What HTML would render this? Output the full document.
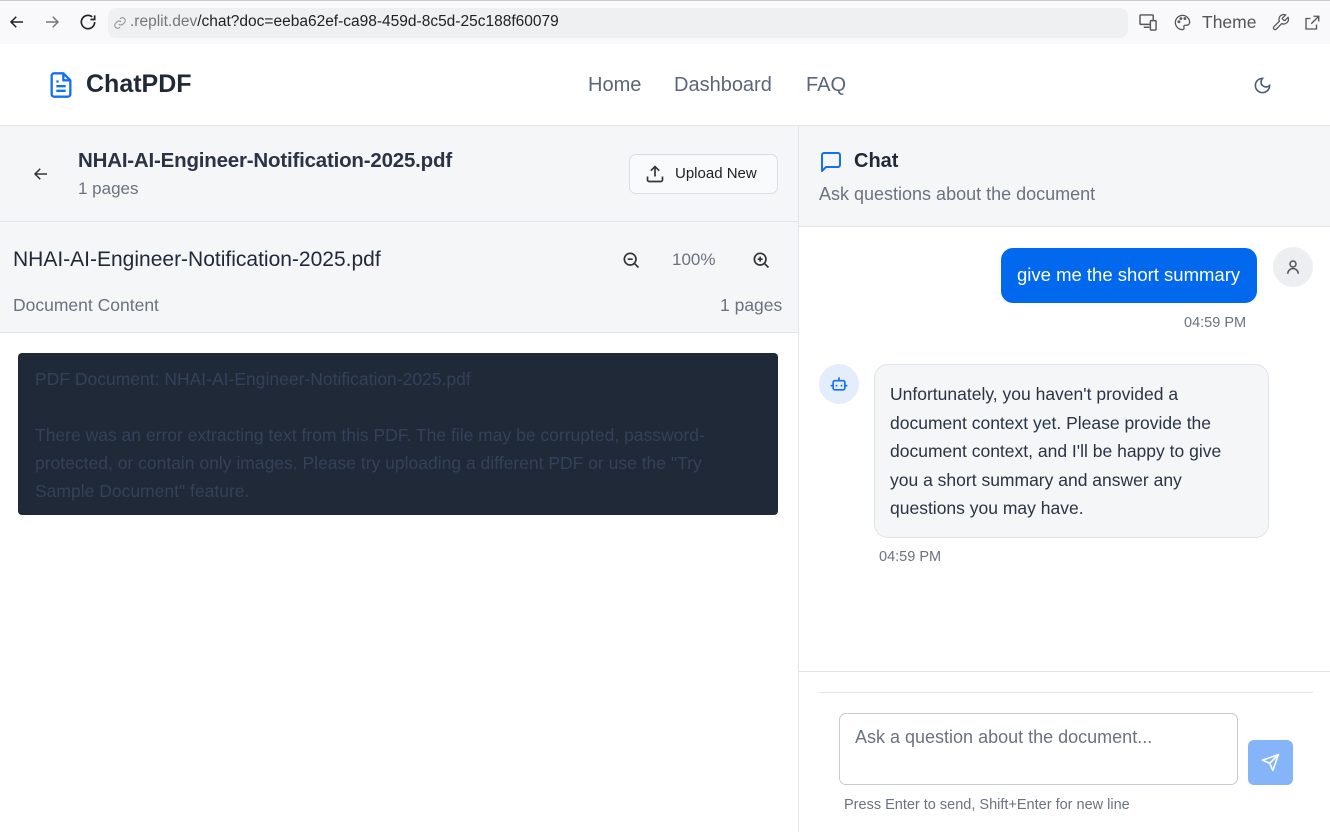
<!DOCTYPE html>
<html><head><meta charset="utf-8"><style>
*{box-sizing:border-box;margin:0;padding:0}
body{width:1330px;height:832px;overflow:hidden;font-family:"Liberation Sans",sans-serif;background:#fff;position:relative;color:#1f2937}
.a{position:absolute;white-space:nowrap}
svg{display:block}
</style></head><body>
<div class="a" style="left:0;top:0;width:1330px;height:44px;background:#f9f9fb;border-top:1px solid #ccc"></div>
<svg class="a" style="left:8px;top:13px" width="18" height="18" viewBox="0 0 24 24" fill="none" stroke="#222" stroke-width="2"><path d="M20 12H5M11 5l-7 7 7 7"/></svg>
<svg class="a" style="left:43px;top:13px" width="18" height="18" viewBox="0 0 24 24" fill="none" stroke="#777" stroke-width="2"><path d="M4 12h15M13 5l7 7-7 7"/></svg>
<svg class="a" style="left:78px;top:12px" width="20" height="20" viewBox="0 0 24 24" fill="none" stroke="#222" stroke-width="2"><path d="M20 12a8 8 0 1 1-3-6.2M20 4v5h-5"/></svg>
<div class="a" style="left:108px;top:8px;width:1020px;height:30px;background:#eef0f2;border-radius:8px"></div>
<svg class="a" style="left:113px;top:16px" width="14" height="14" viewBox="0 0 24 24" fill="none" stroke="#999" stroke-width="2"><path d="M10 14a5 5 0 0 0 7 0l3-3a5 5 0 0 0-7-7l-1 1M14 10a5 5 0 0 0-7 0l-3 3a5 5 0 0 0 7 7l1-1"/></svg>
<div class="a" style="left:130px;top:13px;font-size:15.5px;color:#222"><span style="color:#777">.replit.dev</span>/chat?doc=eeba62ef-ca98-459d-8c5d-25c188f60079</div>
<svg class="a" style="left:1139px;top:14px" width="19" height="17" viewBox="0 0 20 18" fill="none" stroke="#555" stroke-width="1.5"><rect x="1" y="1" width="14" height="10" rx="1"/><path d="M5 14h6"/><rect x="12" y="7" width="6" height="10" rx="1" fill="#f9f9fb"/></svg>
<svg class="a" style="left:1173px;top:13px" width="19" height="19" viewBox="0 0 24 24" fill="none" stroke="#555" stroke-width="1.6"><path d="M12 3a9 9 0 0 0 0 18c1.5 0 2-1 2-2s-1-2 0-3 3 0 5-1 2-3 2-4a9 9 0 0 0-9-8z"/><circle cx="7.5" cy="11" r="1"/><circle cx="10" cy="7" r="1"/><circle cx="15" cy="7" r="1"/></svg>
<div class="a" style="left:1202px;top:12px;font-size:17.5px;color:#555">Theme</div>
<svg class="a" style="left:1271px;top:13px" width="19" height="19" viewBox="0 0 24 24" fill="none" stroke="#555" stroke-width="1.6"><path d="M14.7 6.3a1 1 0 0 0 0 1.4l1.6 1.6a1 1 0 0 0 1.4 0l3.8-3.8a6 6 0 0 1-7.9 7.9l-6.9 6.9a2.1 2.1 0 0 1-3-3l6.9-6.9a6 6 0 0 1 7.9-7.9z"/></svg>
<svg class="a" style="left:1303px;top:14px" width="18" height="18" viewBox="0 0 24 24" fill="none" stroke="#555" stroke-width="1.8"><path d="M18 14v6H4V6h6M14 3h7v7M21 3l-10 10"/></svg>
<div class="a" style="left:0;top:44px;width:1330px;height:82px;background:#fff;border-bottom:1px solid #e2e5ea"></div>
<svg class="a" style="left:47px;top:71px" width="28" height="28" viewBox="0 0 24 24" fill="none" stroke="#1570ef" stroke-width="2" stroke-linejoin="round"><path d="M14 2H6a2 2 0 0 0-2 2v16a2 2 0 0 0 2 2h12a2 2 0 0 0 2-2V8z"/><path d="M14 2v6h6M8 13h8M8 17h8M8 9h2"/></svg>
<div class="a" style="left:86px;top:70px;font-size:25px;font-weight:bold;color:#1f2937">ChatPDF</div>
<div class="a" style="left:588px;top:74px;font-size:20px;color:#5b6678">Home</div>
<div class="a" style="left:674px;top:74px;font-size:20px;color:#5b6678">Dashboard</div>
<div class="a" style="left:806px;top:74px;font-size:20px;color:#5b6678">FAQ</div>
<svg class="a" style="left:1253px;top:76px" width="19" height="19" viewBox="0 0 24 24" fill="none" stroke="#4b5a70" stroke-width="2"><path d="M12 3a6 6 0 0 0 9 9 9 9 0 1 1-9-9z"/></svg>
<div class="a" style="left:798px;top:126px;width:1px;height:706px;background:#e2e5ea"></div>
<div class="a" style="left:0;top:126px;width:798px;height:96px;background:#f5f6f8;border-bottom:1px solid #e2e5ea"></div>
<svg class="a" style="left:32px;top:165px" width="18" height="18" viewBox="0 0 24 24" fill="none" stroke="#333" stroke-width="2"><path d="M20 12H5M11 5l-7 7 7 7"/></svg>
<div class="a" style="left:78px;top:149px;font-size:20.5px;font-weight:bold;color:#2a3444;letter-spacing:-0.2px">NHAI-AI-Engineer-Notification-2025.pdf</div>
<div class="a" style="left:78px;top:179px;font-size:17px;color:#6b7280">1 pages</div>
<div class="a" style="left:629px;top:154px;width:149px;height:40px;border:1px solid #d9dde3;border-radius:7px;background:#f9fafb"></div>
<svg class="a" style="left:645px;top:164px" width="20" height="20" viewBox="0 0 24 24" fill="none" stroke="#333" stroke-width="2"><path d="M21 15v4a2 2 0 0 1-2 2H5a2 2 0 0 1-2-2v-4M17 8l-5-5-5 5M12 3v12"/></svg>
<div class="a" style="left:675px;top:165px;font-size:15px;color:#222">Upload New</div>
<div class="a" style="left:0;top:222px;width:798px;height:111px;background:#f5f6f8;border-bottom:1px solid #e2e5ea"></div>
<div class="a" style="left:13px;top:248px;font-size:21px;color:#1f2937">NHAI-AI-Engineer-Notification-2025.pdf</div>
<svg class="a" style="left:621px;top:250px" width="20" height="20" viewBox="0 0 24 24" fill="none" stroke="#333" stroke-width="2"><circle cx="11" cy="11" r="7"/><path d="M21 21l-5-5M8 11h6"/></svg>
<div class="a" style="left:672px;top:250px;font-size:17px;color:#6b7280">100%</div>
<svg class="a" style="left:751px;top:250px" width="20" height="20" viewBox="0 0 24 24" fill="none" stroke="#333" stroke-width="2"><circle cx="11" cy="11" r="7"/><path d="M21 21l-5-5M8 11h6M11 8v6"/></svg>
<div class="a" style="left:13px;top:295px;font-size:17.5px;color:#6b7280">Document Content</div>
<div class="a" style="left:720px;top:295px;font-size:17.5px;color:#6b7280">1 pages</div>
<div class="a" style="left:18px;top:353px;width:760px;height:162px;background:#1f2937;border-radius:4px;padding:12px 17px;font-size:17.5px;line-height:28px;color:#34415a">PDF Document: NHAI-AI-Engineer-Notification-2025.pdf<br><br>There was an error extracting text from this PDF. The file may be corrupted, password-<br>protected, or contain only images. Please try uploading a different PDF or use the "Try<br>Sample Document" feature.</div>
<div class="a" style="left:799px;top:126px;width:531px;height:101px;background:#f5f6f8;border-bottom:1px solid #e2e5ea"></div>
<svg class="a" style="left:819px;top:150px" width="24" height="24" viewBox="0 0 24 24" fill="none" stroke="#1570ef" stroke-width="2" stroke-linejoin="round"><path d="M21 15a2 2 0 0 1-2 2H7l-4 4V5a2 2 0 0 1 2-2h14a2 2 0 0 1 2 2z"/></svg>
<div class="a" style="left:854px;top:150px;font-size:20px;font-weight:bold;color:#1f2937">Chat</div>
<div class="a" style="left:819px;top:184px;font-size:18px;color:#6b7280">Ask questions about the document</div>
<div class="a" style="left:1001px;top:248px;width:256px;height:55px;background:#0268ed;border-radius:12px;color:#fff;font-size:18.5px;padding:16px 0 0 16px">give me the short summary</div>
<div class="a" style="left:1273px;top:247px;width:40px;height:40px;border-radius:50%;background:#eceef1"></div>
<svg class="a" style="left:1284px;top:258px" width="18" height="18" viewBox="0 0 24 24" fill="none" stroke="#555" stroke-width="2"><circle cx="12" cy="8" r="4"/><path d="M5 21a7 7 0 0 1 14 0"/></svg>
<div class="a" style="left:1184px;top:315px;font-size:14.5px;color:#6b7280">04:59 PM</div>
<div class="a" style="left:819px;top:364px;width:40px;height:40px;border-radius:50%;background:#e3edfc"></div>
<svg class="a" style="left:829px;top:374px" width="20" height="20" viewBox="0 0 24 24" fill="none" stroke="#1570ef" stroke-width="2"><path d="M12 4v4"/><rect x="5" y="8" width="14" height="11" rx="2"/><path d="M2 14h3M19 14h3M9 13v2M15 13v2"/></svg>
<div class="a" style="left:874px;top:364px;width:395px;height:174px;background:#f5f6f8;border:1px solid #dfe2e7;border-radius:14px;padding:15px 15px;font-size:17.5px;line-height:28.5px;color:#2a3444">Unfortunately, you haven't provided a<br>document context yet. Please provide the<br>document context, and I'll be happy to give<br>you a short summary and answer any<br>questions you may have.</div>
<div class="a" style="left:879px;top:549px;font-size:14.5px;color:#6b7280">04:59 PM</div>
<div class="a" style="left:799px;top:671px;width:531px;height:1px;background:#e2e5ea"></div>
<div class="a" style="left:819px;top:692px;width:494px;height:1px;background:#e2e5ea"></div>
<div class="a" style="left:839px;top:713px;width:399px;height:72px;border:1px solid #c5cbd3;border-radius:7px;padding:13px 15px;font-size:18px;color:#6b7280">Ask a question about the document...</div>
<div class="a" style="left:1248px;top:740px;width:45px;height:45px;background:#85b4f8;border-radius:6px"></div>
<svg class="a" style="left:1261px;top:753px" width="19" height="19" viewBox="0 0 24 24" fill="none" stroke="#fff" stroke-width="2" stroke-linejoin="round"><path d="M22 2L11 13M22 2l-7 20-4-9-9-4z"/></svg>
<div class="a" style="left:844px;top:797px;font-size:14.5px;color:#6b7280">Press Enter to send, Shift+Enter for new line</div>
</body></html>
